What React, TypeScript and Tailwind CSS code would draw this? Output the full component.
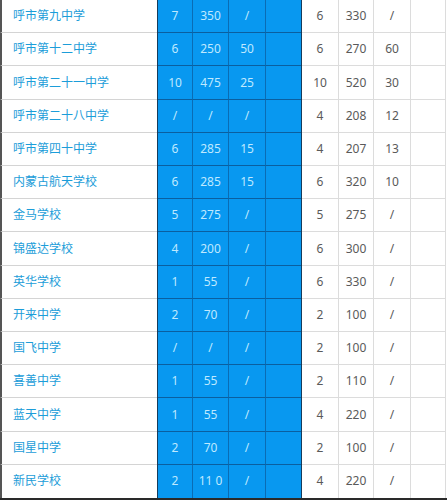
import React from "react";

const rows: [string, string[], string[]][] = [
  ["呼市第九中学", ["7", "350", "/"], ["6", "330", "/"]],
  ["呼市第十二中学", ["6", "250", "50"], ["6", "270", "60"]],
  ["呼市第二十一中学", ["10", "475", "25"], ["10", "520", "30"]],
  ["呼市第二十八中学", ["/", "/", "/"], ["4", "208", "12"]],
  ["呼市第四十中学", ["6", "285", "15"], ["4", "207", "13"]],
  ["内蒙古航天学校", ["6", "285", "15"], ["6", "320", "10"]],
  ["金马学校", ["5", "275", "/"], ["5", "275", "/"]],
  ["锦盛达学校", ["4", "200", "/"], ["6", "300", "/"]],
  ["英华学校", ["1", "55", "/"], ["6", "330", "/"]],
  ["开来中学", ["2", "70", "/"], ["2", "100", "/"]],
  ["国飞中学", ["/", "/", "/"], ["2", "100", "/"]],
  ["喜善中学", ["1", "55", "/"], ["2", "110", "/"]],
  ["蓝天中学", ["1", "55", "/"], ["4", "220", "/"]],
  ["国星中学", ["2", "70", "/"], ["2", "100", "/"]],
  ["新民学校", ["2", "11 0", "/"], ["4", "220", "/"]],
];

const blueW = ["w-[35px]", "w-[36px]", "w-[37px]", "w-[35px]"];
const whiteW = ["w-[37px]", "w-[35px]", "w-[37px]", "w-[35px]"];

export default function App() {
  return (
    <div
      className="w-[447px] h-[500px] bg-white overflow-hidden flex flex-col border-b-2 border-[#2a2a2a]"
      style={{ fontFamily: '"Noto Sans", "Noto Sans CJK SC", sans-serif' }}
    >
      {rows.map(([name, b, w], i) => (
        <div key={i} className="flex flex-1 min-h-0">
          <div
            className={`w-[157px] flex items-center pl-[11px] border-l-2 border-[#555] text-[12px] text-[#1c9dd9] ${
              i < rows.length - 1 ? "border-b border-b-[#d4d4d4]" : ""
            }`}
          >
            {name}
          </div>
          <div className="flex bg-[#0898f0] border-l-[1.5px] border-r-[1.5px] border-[#163c5c]">
            {[...b, ""].map((v, j) => (
              <div
                key={j}
                className={`${blueW[j]} flex items-center justify-center text-[12px] text-[#bfe9ff] ${
                  j < 3 ? "border-r border-r-[#0a6cb4]" : ""
                } ${i < rows.length - 1 ? "border-b border-b-[#0b5f9f]" : ""}`}
              >
                {v}
              </div>
            ))}
          </div>
          <div className="flex">
            {[...w, ""].map((v, j) => (
              <div
                key={j}
                className={`${whiteW[j]} flex items-center justify-center text-[12px] text-[#5a5a5a] border-r border-r-[#dcdcdc] ${
                  i < rows.length - 1 ? "border-b border-b-[#dcdcdc]" : ""
                }`}
              >
                {v}
              </div>
            ))}
          </div>
        </div>
      ))}
    </div>
  );
}
